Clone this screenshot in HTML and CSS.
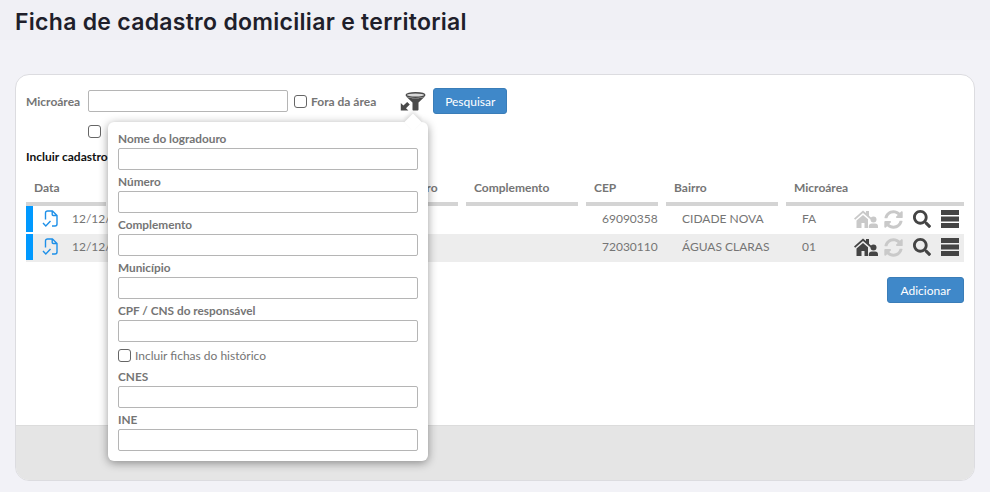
FILE: index.html
```html
<!DOCTYPE html>
<html lang="pt-BR">
<head>
<meta charset="utf-8">
<title>Ficha de cadastro domiciliar e territorial</title>
<link rel="stylesheet" href="styles.css">
</head>
<body>
<svg class="defs" width="0" height="0" aria-hidden="true">
  <symbol id="i-file" viewBox="0 0 16 18"><path d="M3.500 9.500V3a2 2 0 0 1 2-2h5l4.500 4.500V14a2 2 0 0 1-2 2h-3M10.200 1v3.500a1 1 0 0 0 1 1H15" fill="none" stroke="currentColor" stroke-width="1.400" stroke-linejoin="round"/><path d="M1 13l2.800 3L8.500 11" fill="none" stroke="currentColor" stroke-width="1.400"/></symbol>
  <symbol id="i-house" viewBox="0 0 24 18"><path d="M0 8.500 9 .5l3 2.600V1h3v4.800l2.800 2.500-1.200 1.300L9 3 1.200 9.800z" fill="currentColor"/><path d="M2.500 10.500 9 5l5 4.200V18h-3.500v-5h-3v5H2.500z" fill="currentColor"/><circle cx="19.500" cy="9.500" r="3" fill="currentColor"/><path d="M14.800 18v-1.500c0-1.700 1.200-3 3-3h3.400c1.700 0 2.800 1.300 2.800 3V18z" fill="currentColor"/></symbol>
  <symbol id="i-sync" viewBox="0 0 512 512"><path fill="currentColor" d="M370.72 133.28C339.458 104.008 298.888 87.962 255.848 88c-77.458.068-144.328 53.178-162.791 126.85-1.344 5.363-6.122 9.15-11.651 9.15H24.103c-7.498 0-13.194-6.807-11.807-14.176C33.933 94.924 134.813 8 256 8c66.448 0 126.791 26.136 171.315 68.685L463.03 40.97C478.149 25.851 504 36.559 504 57.941V192c0 13.255-10.745 24-24 24H345.941c-21.382 0-32.09-25.851-16.971-40.971l41.75-41.749zM32 296h134.059c21.382 0 32.09 25.851 16.971 40.971l-41.75 41.75c31.262 29.273 71.835 45.319 114.876 45.28 77.418-.07 144.315-53.144 162.787-126.849 1.344-5.363 6.122-9.15 11.651-9.15h57.304c7.498 0 13.194 6.807 11.807 14.176C478.067 417.076 377.187 504 256 504c-66.448 0-126.791-26.136-171.315-68.685L48.97 471.03C33.851 486.149 8 475.441 8 454.059V320c0-13.255 10.745-24 24-24z"/></symbol>
  <symbol id="i-search" viewBox="0 0 512 512"><path fill="currentColor" d="M505 442.7L405.3 343c-4.500-4.500-10.600-7-17-7H372c27.600-35.300 44-79.700 44-128C416 93.100 322.900 0 208 0S0 93.100 0 208s93.100 208 208 208c48.300 0 92.700-16.400 128-44v16.300c0 6.400 2.500 12.500 7 17l99.700 99.700c9.400 9.400 24.600 9.400 33.900 0l28.300-28.300c9.400-9.400 9.400-24.600.1-34zM208 336c-70.700 0-128-57.200-128-128 0-70.700 57.200-128 128-128 70.700 0 128 57.200 128 128 0 70.700-57.200 128-128 128z"/></symbol>
  <symbol id="i-bars" viewBox="0 0 18 18"><path fill="currentColor" d="M0 0h18v5H0zM0 6.500h18v5H0zM0 13h18v5H0z"/></symbol>
</svg>

<header class="page-head"><h1 class="page-title">Ficha de cadastro domiciliar e territorial</h1></header>

<main class="card">
  <div class="card-body">
    <div class="filter-row">
      <label class="field-label" for="micro">Microárea</label>
      <input class="text-input micro-input" id="micro" type="text">
      <label class="check-label"><input class="check" type="checkbox"> Fora da área</label>
      <button class="filter-toggle" type="button" aria-label="Filtros">
        <svg width="26" height="19" viewBox="0 0 26 19"><ellipse cx="15.500" cy="3" rx="9.300" ry="2.300" fill="#d8d8d8" stroke="#4a4a4a" stroke-width="1.400"/><path d="M5.800 4.200c2 1.400 5.500 2 9.700 2s7.700-.6 9.700-2L18.500 10.500v7c0 .6-.5 1-1 1h-4c-.5 0-1-.4-1-1v-7z" fill="#4a4a4a"/><path d="M.8 11v7.600h7.600L6 16.200l3.800-3.800-2.600-2.500-3.800 3.700z" fill="#4a4a4a"/></svg>
      </button>
      <button class="btn" type="button">Pesquisar</button>
    </div>
    <div class="filter-row-2"><input class="check" type="checkbox"></div>
    <div class="include-title">Incluir cadastro</div>

    <div class="table">
      <div class="thead">
        <div class="th">Data</div><div class="th">Logradouro</div><div class="th">Número</div><div class="th">Complemento</div><div class="th">CEP</div><div class="th">Bairro</div><div class="th">Microárea</div>
      </div>
      <div class="tr">
        <div class="td td-data"><span class="stripe"></span><svg class="file-ico" width="16" height="18"><use href="#i-file"/></svg><span>12/12/2023</span></div>
        <div class="td"></div><div class="td"></div><div class="td"></div>
        <div class="td td-in">69090358</div><div class="td td-in">CIDADE NOVA</div>
        <div class="td td-last"><span>FA</span><span class="actions"><svg class="off" width="24" height="18"><use href="#i-house"/></svg><svg class="off" width="19" height="19"><use href="#i-sync"/></svg><svg width="18" height="18"><use href="#i-search"/></svg><svg width="18" height="18"><use href="#i-bars"/></svg></span></div>
      </div>
      <div class="tr tr-alt">
        <div class="td td-data"><span class="stripe"></span><svg class="file-ico" width="16" height="18"><use href="#i-file"/></svg><span>12/12/2023</span></div>
        <div class="td"></div><div class="td"></div><div class="td"></div>
        <div class="td td-in">72030110</div><div class="td td-in">ÁGUAS CLARAS</div>
        <div class="td td-last"><span>01</span><span class="actions"><svg width="24" height="18"><use href="#i-house"/></svg><svg class="off" width="19" height="19"><use href="#i-sync"/></svg><svg width="18" height="18"><use href="#i-search"/></svg><svg width="18" height="18"><use href="#i-bars"/></svg></span></div>
      </div>
    </div>
    <div class="add-row"><button class="btn btn-add" type="button">Adicionar</button></div>
  </div>
  <div class="card-foot"></div>

  <div class="popover">
    <label class="pop-label">Nome do logradouro</label><input class="text-input" type="text">
    <label class="pop-label">Número</label><input class="text-input" type="text">
    <label class="pop-label">Complemento</label><input class="text-input" type="text">
    <label class="pop-label">Município</label><input class="text-input" type="text">
    <label class="pop-label">CPF / CNS do responsável</label><input class="text-input" type="text">
    <label class="check-label pop-check"><input class="check" type="checkbox"> Incluir fichas do histórico</label>
    <label class="pop-label">CNES</label><input class="text-input" type="text">
    <label class="pop-label">INE</label><input class="text-input" type="text">
  </div>
</main>
</body>
</html>
```
FILE: styles.css
```css
* { box-sizing: border-box; }
html, body { margin: 0; height: 100%; }
body {
  background: #f2f2f7;
  font-family: Lato, "Liberation Sans", sans-serif;
  font-size: 12px;
  color: #757575;
  overflow: hidden;
}
.defs { position: absolute; }
.page-head { height: 40px; background: #f0f0f5; padding: 8px 15px 0; }
.page-title {
  margin: 0;
  font-family: Inter, "Liberation Sans", sans-serif;
  font-size: 23px;
  font-weight: 600;
  line-height: 28px;
  letter-spacing: .28px;
  color: #1f1f2b;
}
.card {
  position: relative;
  margin: 34px 15px 0;
  height: 407px;
  background: #fff;
  border: 1px solid #dcdce0;
  border-radius: 14px;
  display: flex;
  flex-direction: column;
}
.card-body { flex: 1; padding: 13px 10px 0 10px; }
.card-foot { height: 55px; background: #e5e5e5; border-top: 1px solid #dcdcdc; border-radius: 0 0 13px 13px; }
.filter-row { display: flex; align-items: center; height: 26px; }
.field-label { font-weight: 700; width: 62px; color: #757575; }
.text-input {
  display: block;
  height: 22px;
  background: #fff;
  border: 1px solid #b5b5b5;
  border-radius: 2px;
  padding: 0 4px;
}
.micro-input { width: 200px; }
.check-label { display: flex; align-items: center; gap: 4px; color: #757575; }
.filter-row .check-label { margin-left: 6px; font-weight: 700; }
.check {
  appearance: none;
  margin: 0;
  width: 13px;
  height: 13px;
  background: #fff;
  border: 1px solid #666;
  border-radius: 3px;
  flex: none;
}
.filter-toggle { margin-left: 24px; padding: 0; border: 0; background: none; height: 19px; width: 26px; line-height: 0; }
.btn {
  height: 26px;
  padding: 0 11px;
  background: #3f88c9;
  border: 1px solid #3a7db8;
  border-radius: 3px;
  color: #fff;
  font: 400 12px Lato, "Liberation Sans", sans-serif;
}
.filter-row .btn { margin-left: 7px; width: 74px; padding: 0; }
.filter-row-2 { padding: 11px 0 0 62px; height: 26px; display: flex; align-items: flex-start; }
.include-title { margin-top: 9px; font-size: 12px; font-weight: 700; color: #111; line-height: 15px; }
.table { margin-top: 14px; }
.thead, .tr {
  display: grid;
  grid-template-columns: 80px 264px 72px 112px 72px 112px 178px;
  column-gap: 8px;
  width: 938px;
}
.thead { height: 28px; }
.th {
  border-bottom: 4px solid #d4d4d4;
  padding: 0 0 0 8px;
  font-weight: 700;
  font-size: 12px;
  line-height: 20px;
  color: #757575;
}
.tr { height: 26px; align-items: center; color: #757575; font-size: 12px; }
.tr-alt { height: 28px; margin-top: 2px; background: #ededed; align-items: start; }
.td { min-width: 0; white-space: nowrap; line-height: 26px; }
.td-in { padding-left: 16px; }
.td-data { display: flex; align-items: center; height: 26px; width: 100px; }
.stripe { width: 7px; height: 26px; background: #0099ff; flex: none; }
.file-ico { margin: 0 14px 0 9px; color: #1e90e8; flex: none; }
.td-last { display: flex; align-items: center; height: 26px; padding: 0 5px 0 16px; }
.actions { display: flex; align-items: center; margin-left: auto; color: #444; }
.actions svg { display: block; flex: none; margin-left: 10px; }
.actions svg:first-child { margin-left: 0; }
.actions svg:nth-child(2) { margin-left: 6px; }
.actions .off { color: #c9c9c9; }
.add-row { display: flex; justify-content: flex-end; width: 938px; margin-top: 15px; }
.btn-add { width: 77px; padding: 0; }
.popover {
  position: absolute;
  left: 92px;
  top: 47px;
  width: 320px;
  height: 339px;
  padding: 5px 10px 0;
  background: #fff;
  border-radius: 6px;
  box-shadow: 0 2px 10px rgba(0, 0, 0, .4);
}
.popover::before {
  content: "";
  position: absolute;
  left: 299px;
  top: -6px;
  width: 12px;
  height: 12px;
  background: #fff;
  transform: rotate(45deg);
  box-shadow: -2px -2px 4px rgba(0, 0, 0, .12);
}
.pop-label { display: block; position: relative; font-weight: 700; font-size: 11.800px; line-height: 23px; height: 21px; color: #757575; }
.popover .text-input { width: 300px; position: relative; }
.pop-check { height: 23px; padding-top: 4px; font-size: 12px; }
```
